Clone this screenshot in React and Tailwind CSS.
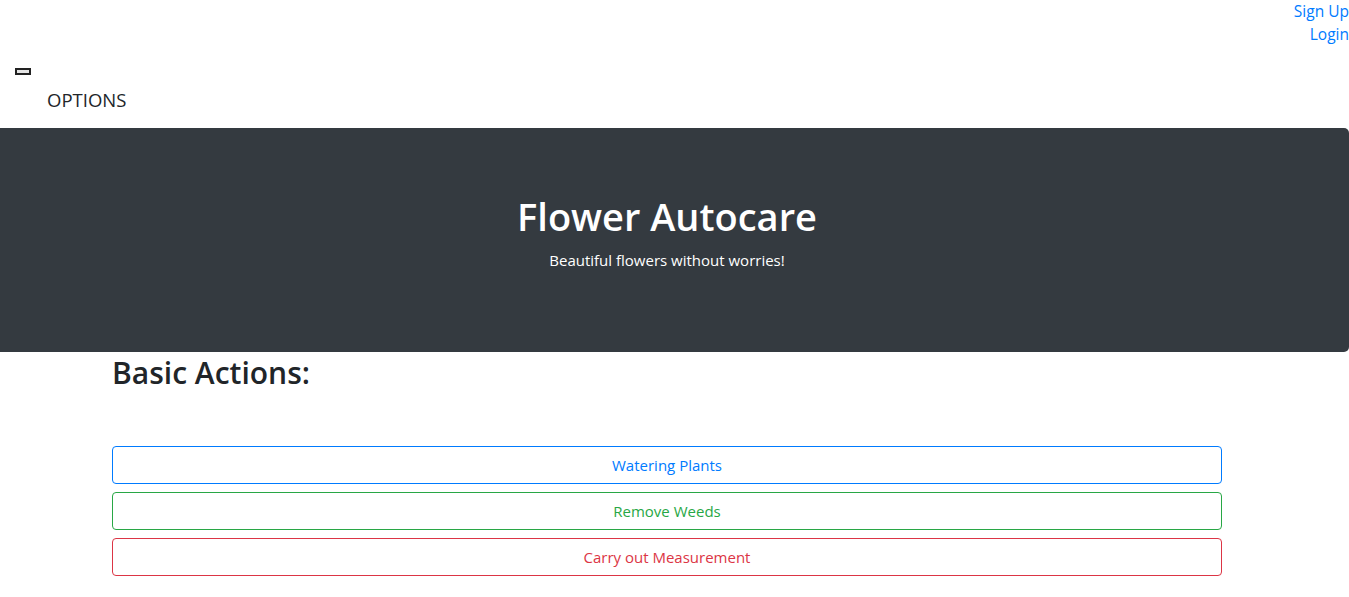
import React from 'react';

const font = { fontFamily: '"Open Sans", "Noto Sans", sans-serif' };

export default function App() {
  return (
    <div className="min-h-[597px] bg-white text-[#212529]" style={font}>
      {/* top links */}
      <div className="flex flex-col items-end text-[15.5px] leading-[23px] text-[#007bff]">
        <a href="#" className="hover:underline">Sign Up</a>
        <a href="#" className="hover:underline">Login</a>
      </div>

      {/* toggler + options */}
      <div className="pt-[22px] pl-[15px]">
        <button className="block w-[16px] h-[7px] border-2 border-[#222] bg-[#e5e5e5]" />
      </div>
      <div className="pl-[47px] pt-[10px] pb-[13px] text-[18.5px] leading-[30px] font-normal text-[#212529]">
        OPTIONS
      </div>

      {/* jumbotron */}
      <div className="bg-[#343a40] rounded-r-[5px] py-[64px] pr-[15px] text-center text-white">
        <h1 className="text-[38px] leading-[48px] font-semibold mb-[8px]">Flower Autocare</h1>
        <p className="text-[15px] leading-[24px] mb-[16px]">Beautiful flowers without worries!</p>
      </div>

      {/* actions */}
      <div className="pl-[112px] w-[1222px]">
        <h2 className="mt-[2px] text-[30px] leading-[38px] font-semibold text-[#212529] mb-[54px]">Basic Actions:</h2>
        <div className="flex flex-col gap-[8px]">
          <button className="h-[38px] w-full rounded-[4px] border border-[#007bff] text-[15px] text-[#007bff] hover:bg-[#007bff] hover:text-white">
            Watering Plants
          </button>
          <button className="h-[38px] w-full rounded-[4px] border border-[#28a745] text-[15px] text-[#28a745] hover:bg-[#28a745] hover:text-white">
            Remove Weeds
          </button>
          <button className="h-[38px] w-full rounded-[4px] border border-[#dc3545] text-[15px] text-[#dc3545] hover:bg-[#dc3545] hover:text-white">
            Carry out Measurement
          </button>
        </div>
      </div>
    </div>
  );
}
